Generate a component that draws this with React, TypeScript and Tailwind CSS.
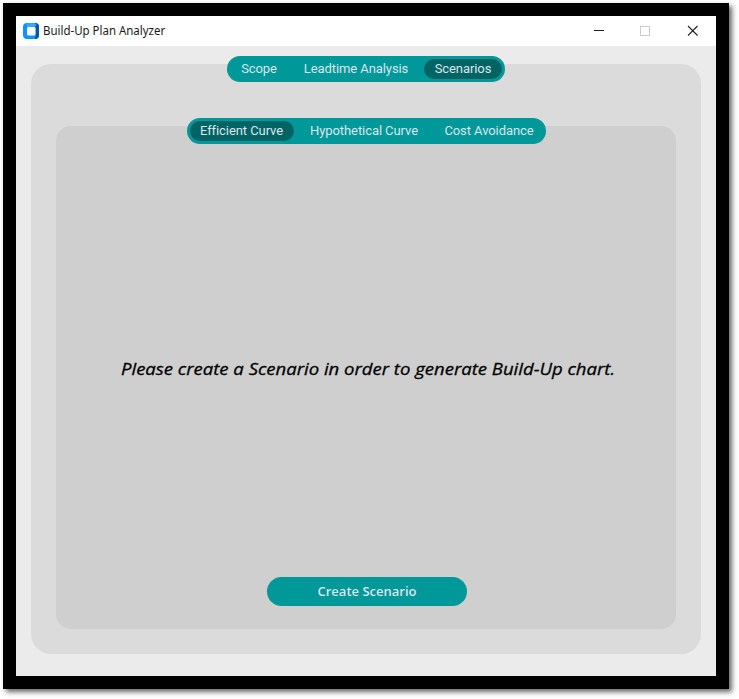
import React from "react";

type Tab = { label: string; cell: string };

function SegmentedTabs({ tabs, active, className }: { tabs: Tab[]; active: string; className: string }) {
  return (
    <nav
      className={`flex h-[26px] shrink-0 items-start rounded-full bg-[#009898] pt-[3px] font-['Roboto',sans-serif] text-[13px] leading-[19px] tracking-[-0.08px] text-[#dce4ee] ${className}`}
    >
      {tabs.map((tab) => (
        <button
          key={tab.label}
          className={`h-[20px] shrink-0 whitespace-nowrap rounded-full pb-px ${tab.cell} ${
            tab.label === active ? "bg-[#006464]" : ""
          }`}
        >
          {tab.label}
        </button>
      ))}
    </nav>
  );
}

const mainTabs: Tab[] = [
  { label: "Scope", cell: "w-[58px]" },
  { label: "Leadtime Analysis", cell: "w-[136px]" },
  { label: "Scenarios", cell: "w-[78px]" },
];

const curveTabs: Tab[] = [
  { label: "Efficient Curve", cell: "w-[104px]" },
  { label: "Hypothetical Curve", cell: "w-[141px]" },
  { label: "Cost Avoidance", cell: "w-[109px]" },
];

function AppIcon() {
  return (
    <svg width="16" height="17" viewBox="0 0 16 17">
      <rect x="0" y="0" width="16" height="16" rx="4" fill="#0b96ff" />
      <path d="M12 0A4 4 0 0 1 16 4V12A4 4 0 0 1 12 16L12.500 12V4Z" fill="#0655b0" />
      <path d="M3.500 .3H12L13.500 1.500L11.500 4H4Z" fill="#35a9ff" />
      <rect x="4" y="4" width="8.500" height="8.500" rx="1.500" fill="#fff" />
    </svg>
  );
}

function TitleBar() {
  return (
    <header className="flex h-[30px] shrink-0 items-center bg-white pl-[7px] pr-[17px]">
      <AppIcon />
      <h1 className="ml-[4px] grow origin-left scale-x-[0.955] whitespace-nowrap font-['Noto_Sans',sans-serif] text-[12px] leading-[16px] text-[#1a1a1a]">
        Build-Up Plan Analyzer
      </h1>
      <svg width="106" height="12" viewBox="0 0 106 12" fill="none">
        <path d="M1 5.500H11" stroke="#222" />
        <rect x="47.500" y="1.500" width="9" height="9" stroke="#ccc" />
        <path d="M95 1L104.500 10.500M104.500 1L95 10.500" stroke="#222" strokeWidth="1.100" />
      </svg>
    </header>
  );
}

export default function App() {
  return (
    <div className="h-[699px] w-[739px] overflow-hidden bg-white pl-[3px] pt-[3px]">
      <div className="flex h-[686px] w-[726px] flex-col border-[13px] border-black bg-[#ebebeb] shadow-[3px_3px_5px_rgba(0,0,0,0.6)]">
        <TitleBar />
        <main className="flex grow flex-col px-[15px] pb-[22px] pt-[18px]">
          <section className="flex grow flex-col items-center rounded-[20px] bg-[#dbdbdb] px-[25px] pb-[25px]">
            <SegmentedTabs tabs={mainTabs} active="Scenarios" className="-mt-[8px] w-[278px] pl-[3px]" />
            <div className="mt-[44px] flex w-full grow flex-col items-center rounded-[15px] bg-[#cfcfcf]">
              <SegmentedTabs tabs={curveTabs} active="Efficient Curve" className="-mt-[8px] w-[359px] pl-[3px]" />
              <p className="mt-[213px] scale-x-[1.089] whitespace-nowrap pl-[4px] font-['Open_Sans',sans-serif] text-[17px] font-medium italic leading-[24px] text-black [-webkit-text-stroke:0.3px_black]">
                Please create a Scenario in order to generate Build-Up chart.
              </p>
              <button className="ml-[2px] mt-[196px] h-[29px] w-[200px] rounded-full bg-[#009898] font-['Open_Sans',sans-serif] text-[13px] font-semibold leading-[29px] text-[#dce4ee]">
                Create Scenario
              </button>
            </div>
          </section>
        </main>
      </div>
    </div>
  );
}
